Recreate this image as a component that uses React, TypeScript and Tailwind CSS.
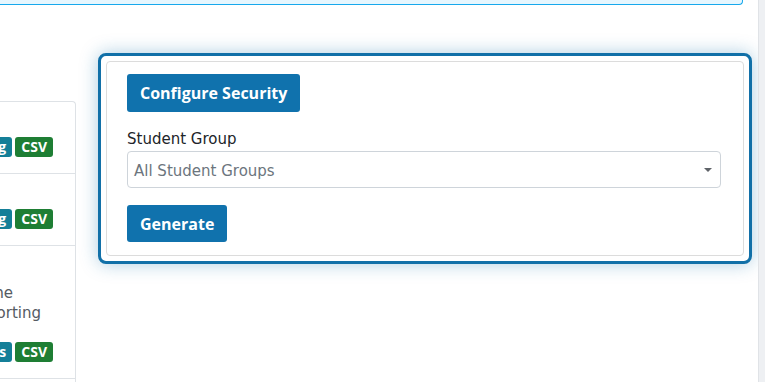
const rows = [
  { h: "h-[72px]", lines: [] as { text: string; pr: string }[], badge: "Listing" },
  { h: "h-[72px]", lines: [] as { text: string; pr: string }[], badge: "Listing" },
  {
    h: "h-[133px]",
    lines: [
      { text: "Enrolment by programme", pr: "pr-[62px]" },
      { text: "Programme for reporting", pr: "pr-[34px]" },
    ],
    badge: "Details",
  },
  { h: "h-[72px]", lines: [] as { text: string; pr: string }[], badge: "Listing" },
];

const sans = '"DejaVu Sans", "Open Sans", sans-serif';
const bold = '"Open Sans", "Liberation Sans", sans-serif';

function ReportList() {
  return (
    <div className="w-[76px] shrink-0 mt-[48px] overflow-hidden">
      <div className="w-[76px] border-t border-r border-[#dee2e6] rounded-tr-[4px]">
        {rows.map((row, i) => (
          <div
            key={i}
            className={`${row.h} border-b border-[#dee2e6] flex flex-col justify-end pb-[16px]`}
          >
            {row.lines.length > 0 && (
              <div className="mb-[19px] text-[15px] leading-[20px] text-[#555b63]" style={{ fontFamily: sans }}>
                {row.lines.map((l) => (
                  <div key={l.text} className={`whitespace-nowrap flex justify-end ${l.pr}`}>
                    {l.text}
                  </div>
                ))}
              </div>
            )}
            <div className="flex justify-end gap-[3px] pr-[22px]" style={{ fontFamily: bold }}>
              <span className="whitespace-nowrap h-[20px] px-[6px] rounded-[3px] bg-[#147f98] text-white text-[14px] font-bold leading-[20px]">
                {row.badge}
              </span>
              <span className="h-[20px] px-[6px] rounded-[3px] bg-[#1e7e34] text-white text-[14px] font-bold leading-[20px]">
                CSV
              </span>
            </div>
          </div>
        ))}
      </div>
    </div>
  );
}

export default function App() {
  return (
    <div
      className="w-[765px] h-[382px] overflow-hidden bg-white flex"
      style={{ fontFamily: sans }}
    >
      <div className="flex-1 flex flex-col min-h-0">
        {/* Top notice strip */}
        <div className="shrink-0 w-[743px] h-[5px] bg-[#e6f6fe] border-b border-r border-[#17a8ec] rounded-br-[4px]" />

        <div className="shrink-0 flex items-start mt-[48px] gap-[22px]">
          <ReportList />

          {/* Report card */}
          <div className="w-[654px] h-[211px] border-[3px] border-[#1170a8] rounded-[8px] bg-white p-[5px] shadow-[0_0_18px_rgba(17,112,168,0.35)]">
            <div className="h-full border border-[#dcdcdc] rounded-[4px] pl-[20px] pr-[22px] pt-[12px]">
              <button
                className="h-[38px] px-[13px] rounded-[3px] bg-[#1072ad] text-white text-[16px] font-bold"
                style={{ fontFamily: bold }}
              >
                Configure Security
              </button>
              <div className="mt-[16px] text-[15px] leading-[22px] text-[#212529]">Student Group</div>
              <div className="mt-[1px] h-[37px] border border-[#ced4da] rounded-[4px] flex items-center justify-between pl-[6px] pr-[8px]">
                <span className="pt-[4px] text-[15px] text-[#6c757d]">All Student Groups</span>
                <span className="w-0 h-0 border-l-[4px] border-r-[4px] border-t-[4px] border-l-transparent border-r-transparent border-t-[#5f6368]" />
              </div>
              <button
                className="mt-[17px] h-[37px] px-[13px] rounded-[3px] bg-[#1072ad] text-white text-[16px] font-bold"
                style={{ fontFamily: bold }}
              >
                Generate
              </button>
            </div>
          </div>
        </div>
      </div>

      {/* scrollbar track */}
      <div className="w-[7px] h-full bg-[#eef0f3] border-l border-[#e0e3e7]" />
    </div>
  );
}
